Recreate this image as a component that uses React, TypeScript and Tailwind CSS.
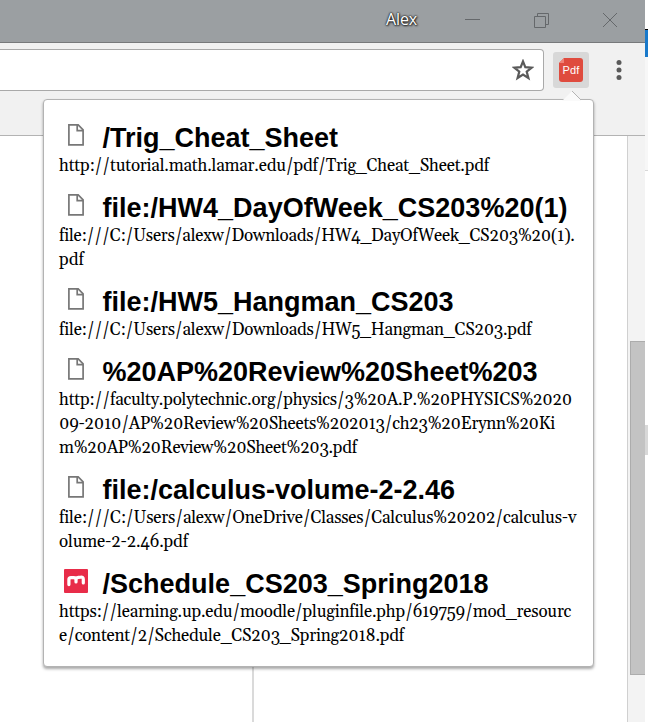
import { useLayoutEffect, useRef } from "react";

type Line = { text: string; width: number };
type Item = { title: string; titleWidth: number; icon: "file" | "moodle"; lines: Line[] };

const items: Item[] = [
  {
    title: "/Trig_Cheat_Sheet",
    titleWidth: 235.5,
    icon: "file",
    lines: [{ text: "http://tutorial.math.lamar.edu/pdf/Trig_Cheat_Sheet.pdf", width: 430 }],
  },
  {
    title: "file:/HW4_DayOfWeek_CS203%20(1)",
    titleWidth: 465,
    icon: "file",
    lines: [
      { text: "file:///C:/Users/alexw/Downloads/HW4_DayOfWeek_CS203%20(1).", width: 515 },
      { text: "pdf", width: 25 },
    ],
  },
  {
    title: "file:/HW5_Hangman_CS203",
    titleWidth: 351,
    icon: "file",
    lines: [{ text: "file:///C:/Users/alexw/Downloads/HW5_Hangman_CS203.pdf", width: 472 }],
  },
  {
    title: "%20AP%20Review%20Sheet%203",
    titleWidth: 435,
    icon: "file",
    lines: [
      { text: "http://faculty.polytechnic.org/physics/3%20A.P.%20PHYSICS%2020", width: 513 },
      { text: "09-2010/AP%20Review%20Sheets%202013/ch23%20Erynn%20Ki", width: 496 },
      { text: "m%20AP%20Review%20Sheet%203.pdf", width: 298 },
    ],
  },
  {
    title: "file:/calculus-volume-2-2.46",
    titleWidth: 352.5,
    icon: "file",
    lines: [
      { text: "file:///C:/Users/alexw/OneDrive/Classes/Calculus%20202/calculus-v", width: 516.5 },
      { text: "olume-2-2.46.pdf", width: 129 },
    ],
  },
  {
    title: "/Schedule_CS203_Spring2018",
    titleWidth: 386,
    icon: "moodle",
    lines: [
      { text: "https://learning.up.edu/moodle/pluginfile.php/619759/mod_resourc", width: 511.5 },
      { text: "e/content/2/Schedule_CS203_Spring2018.pdf", width: 345 },
    ],
  },
];

/* One line of text whose tracking is adjusted so that it spans the given width. */
function Fit({ text, width }: Line) {
  const ref = useRef<HTMLSpanElement>(null);
  useLayoutEffect(() => {
    const el = ref.current;
    if (!el) return;
    el.style.letterSpacing = "0px";
    const natural = el.getBoundingClientRect().width;
    el.style.letterSpacing = `${(width - natural) / text.length}px`;
  }, [text, width]);
  return (
    <span ref={ref} className="inline-block whitespace-nowrap">
      {text}
    </span>
  );
}

function FileIcon() {
  return (
    <svg width="16" height="22" viewBox="0 0 16 22" fill="none" stroke="#777" strokeWidth="1.7" className="mt-[1px] ml-1">
      <path d="M.9 .9H10.2L15.1 5.8V20.9H.9Z" />
      <path d="M9.2 1V6.7H15" />
    </svg>
  );
}

function MoodleIcon() {
  return (
    <svg width="24" height="24" viewBox="0 0 24 24" fill="none">
      <rect width="24" height="24" rx="1" fill="#e82c49" />
      <path
        d="M4.9 15.6V10.6Q4.9 8.6 7 8.6H9.6Q12 8.6 12 10.8V13M12 10.8Q12 8.5 14.4 8.3L16.8 8.2Q19.3 8 19.3 10.2V14"
        stroke="#fff"
        strokeWidth="3.2"
        strokeLinecap="round"
        strokeLinejoin="round"
      />
    </svg>
  );
}

function Popup() {
  return (
    <div className="absolute left-[43px] top-[99px] h-[568px] w-[551px] rounded-[4px] border border-[#b3b3b3] bg-white pl-[15px] pt-[23px] shadow-[0_2px_3px_rgba(0,0,0,0.35)]">
      <svg width="20" height="11" viewBox="0 0 20 11" className="absolute left-[518px] -top-[10px]">
        <path d="M0 11L10 1L19 10V11Z" fill="#fafafa" />
        <path d="M10 1L19 10" stroke="#b3b3b3" fill="none" />
      </svg>
      {items.map((item) => (
        <div key={item.title} className="mb-[15px]">
          <div className="flex h-[31px] items-start">
            <div className="ml-[5px] flex h-[24px] w-[38.5px] items-start">
              {item.icon === "file" ? <FileIcon /> : <MoodleIcon />}
            </div>
            <h1 className="text-[27px] leading-[30px] font-bold">
              <Fit text={item.title} width={item.titleWidth} />
            </h1>
          </div>
          <div className="font-[Georgia,Gelasio,'Liberation_Serif',serif] text-[17px] leading-[24px]">
            {item.lines.map((line) => (
              <div key={line.text} className="h-[24px]">
                <Fit {...line} />
              </div>
            ))}
          </div>
        </div>
      ))}
    </div>
  );
}

export default function App() {
  return (
    <div className="relative flex h-[722px] w-[648px] overflow-hidden bg-white font-['Liberation_Sans',Arial,sans-serif] text-black">
      <div className="flex w-[645px] flex-col">
        <header className="flex h-[43px] items-start justify-end border-b border-[#77797b] bg-[#9b9fa2]">
          <span className="mr-[48px] mt-[8px] font-['Open_Sans',sans-serif] text-[16px] leading-[22px] text-white [text-shadow:0_0_2px_#111,0_0_2px_#222,1px_1px_2px_#333]">
            <Fit text="Alex" width={31} />
          </span>
          <svg width="180" height="42" viewBox="0 0 180 42" fill="none" stroke="#65686b" strokeWidth="1">
            <path d="M0 19.5H15M69.5 16.5H80.5V27.5H69.5ZM72.5 16V13.5H83.5V24.5H81M138 13L152 27M152 13L138 27" />
          </svg>
        </header>
        <div className="flex h-[93px] items-start border-b border-[#b3b3b3] bg-[#f1f1f1]">
          <div className="mt-[6px] flex h-[42px] w-[544px] items-center justify-end rounded-r-[4px] border border-l-0 border-[#a9a9a9] bg-white pr-[9px]">
            <svg width="22" height="22" viewBox="0 0 22 22" fill="none" stroke="#5a5a5a" strokeWidth="2.2">
              <path d="M11 2.4L13.3 8.2L19.6 8.7L14.7 12.6L16.4 19L11 15.5L5.6 19L7.3 12.6L2.4 8.7L8.7 8.2Z" />
            </svg>
          </div>
          <div className="ml-[9px] mt-[9px] flex h-[36px] w-[36px] items-center justify-center rounded-[3px] bg-[#d8d8d8]">
            <div className="relative flex h-[24px] w-[24px] items-center justify-center rounded-[3px] bg-[#df4b3e] text-[11px] leading-none text-white">
              <svg width="5" height="5" viewBox="0 0 5 5" className="absolute left-0 top-0">
                <path d="M0 0H5L0 5Z" fill="#d8d8d8" />
                <path d="M5 0V5H0Z" fill="#f08277" />
              </svg>
              <Fit text="Pdf" width={17} />
            </div>
          </div>
          <svg width="6" height="20" viewBox="0 0 6 20" fill="#5a5a5a" className="ml-[27px] mt-[17px]">
            <circle cx="3" cy="2.5" r="2.5" />
            <circle cx="3" cy="10" r="2.5" />
            <circle cx="3" cy="17.5" r="2.5" />
          </svg>
        </div>
        <main className="flex flex-1">
          <div className="w-[252px]" />
          <div className="w-[375px] border-l-2 border-[#dadada]" />
          <aside className="flex w-[18px] flex-col border-l border-[#d0d0d0] bg-[#f3f3f3] pl-[2px] pt-[205px]">
            <div className="h-[334px] border border-r-0 border-[#acacac] bg-[#c3c3c3]" />
          </aside>
        </main>
      </div>
      <div className="flex w-[3px] flex-col">
        <div className="h-[30px] border-b border-black bg-white" />
        <div className="h-[27px] bg-[#1979ca]" />
        <div className="h-[114px] border-b border-[#d8d8d8] bg-[#f7f7f7]" />
        <div className="h-[254px]" />
        <div className="h-[30px] bg-[#d8d8d8]" />
      </div>
      <Popup />
    </div>
  );
}
